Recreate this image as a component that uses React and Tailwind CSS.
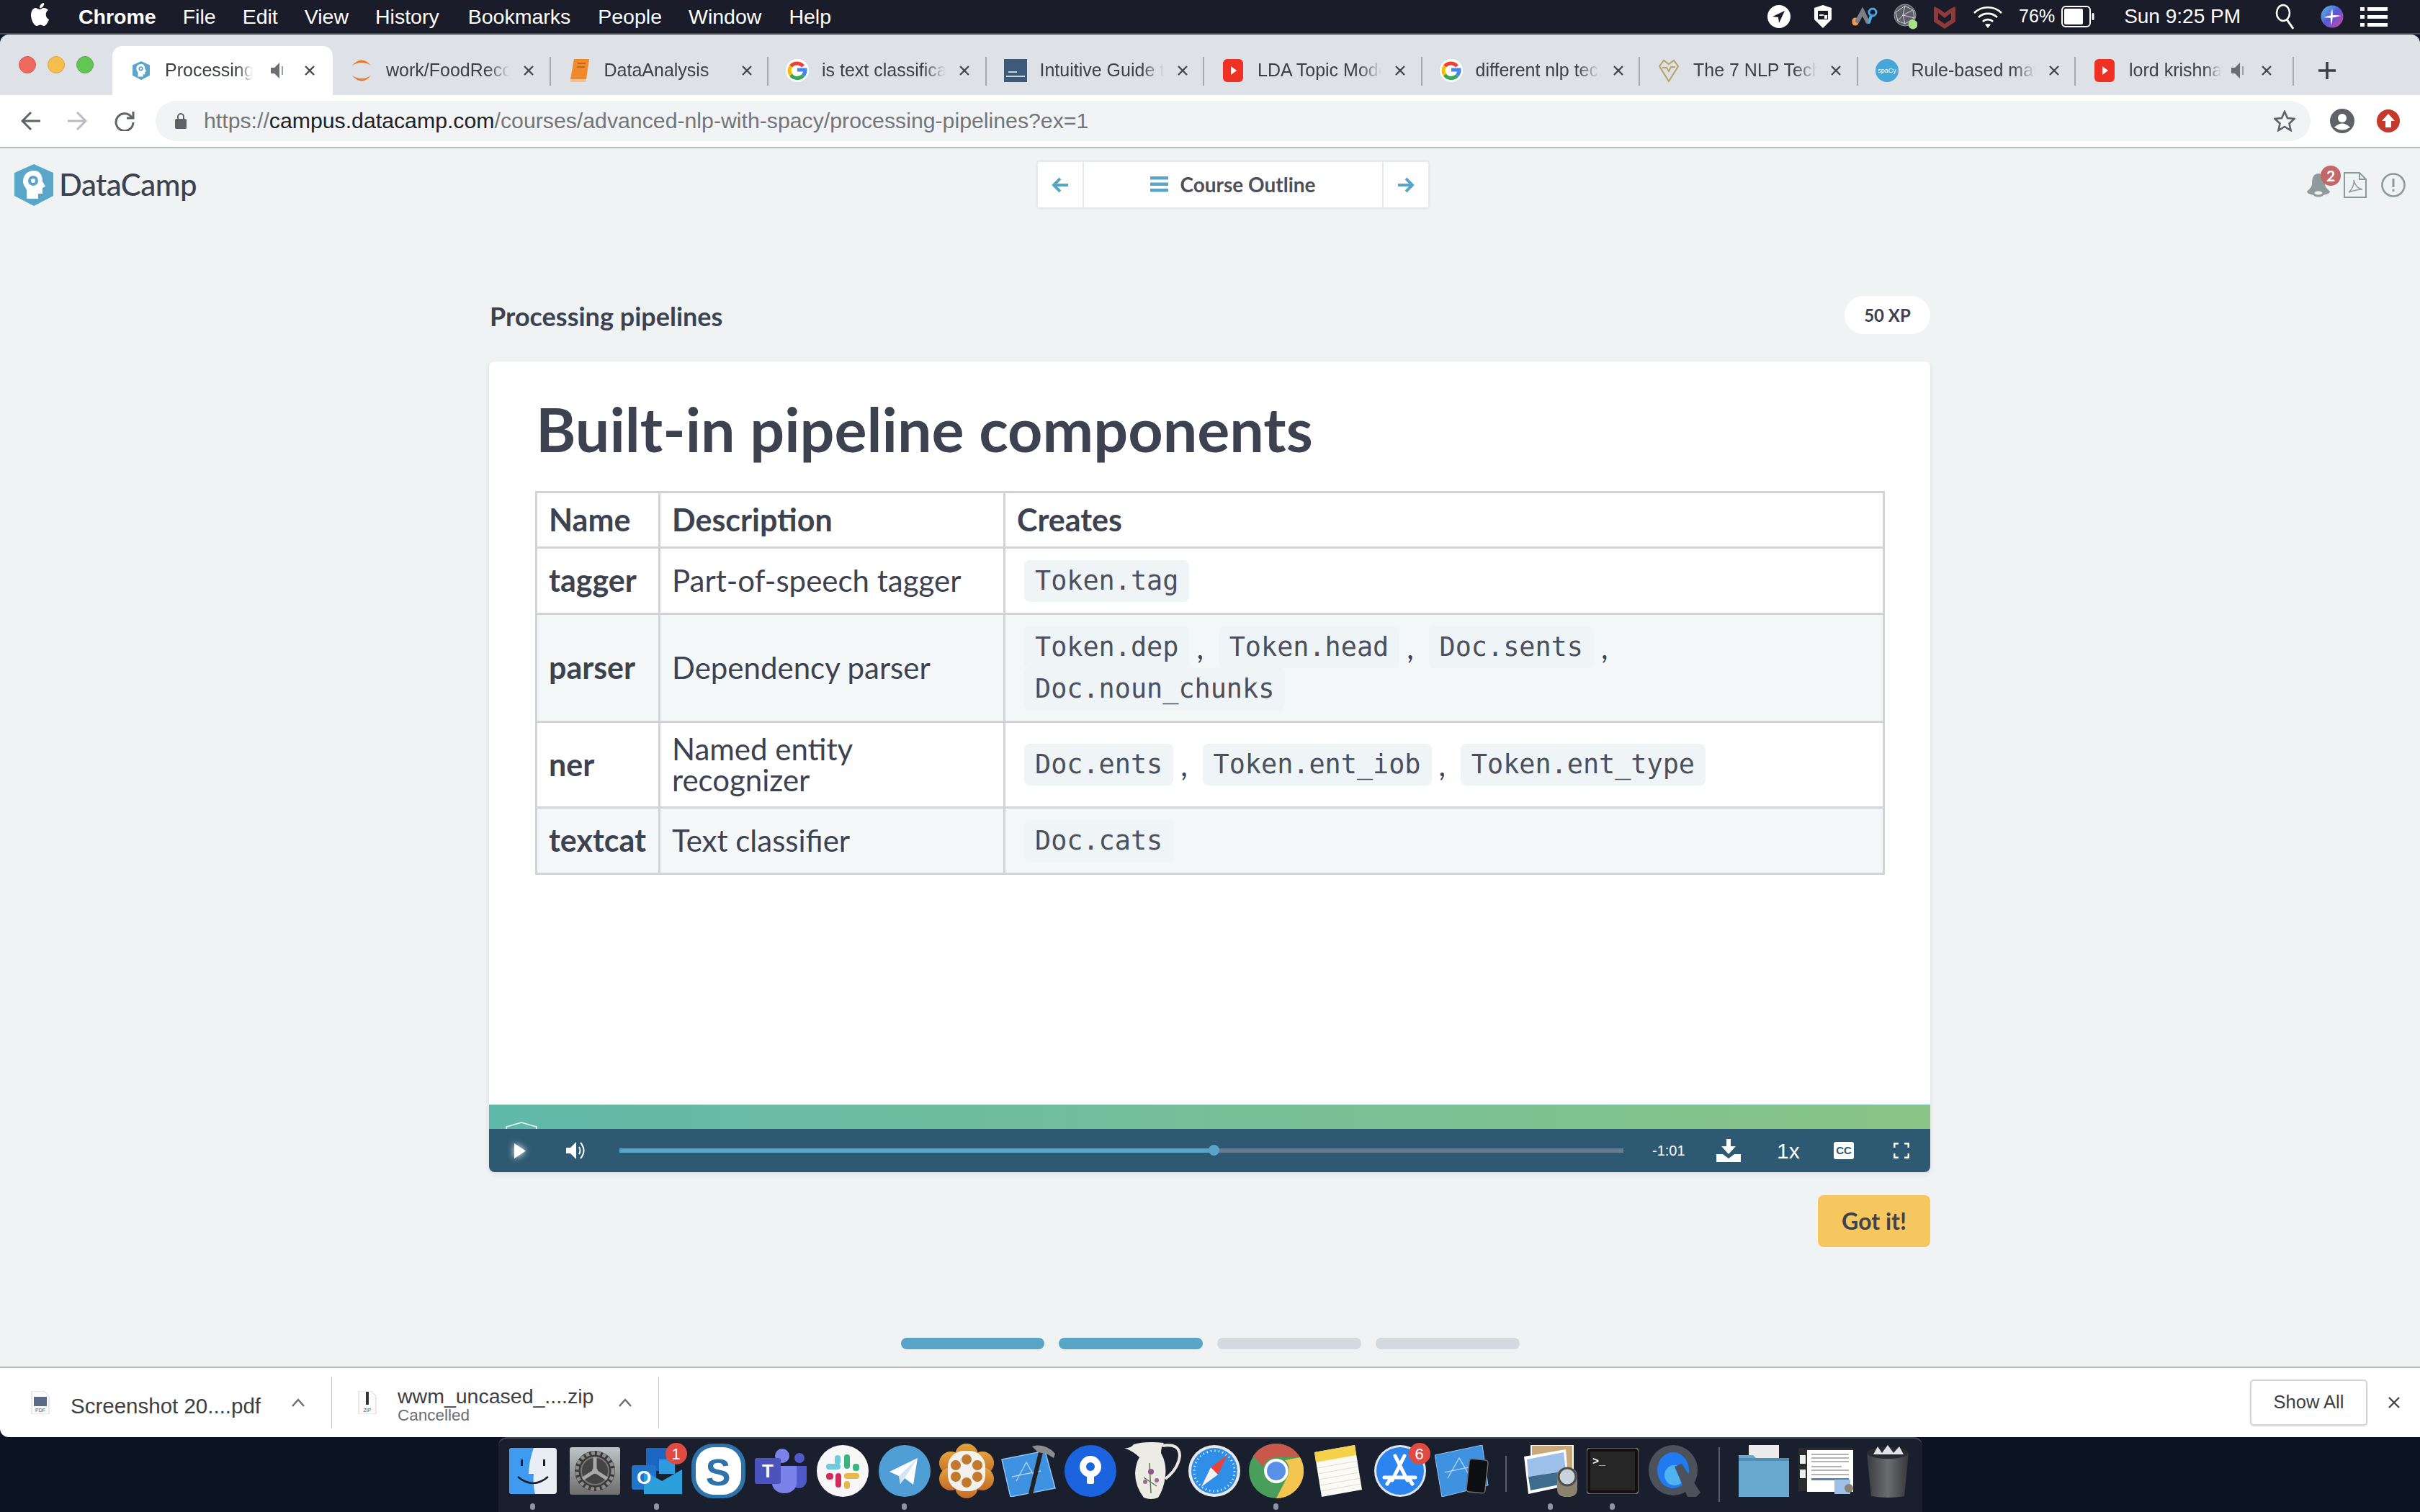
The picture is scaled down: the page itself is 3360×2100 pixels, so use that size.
import React from 'react';

const GoogleIcon = () => (
  <svg viewBox="0 0 32 32" className="w-[32px] h-[32px]">
    <circle cx="16" cy="16" r="16" fill="#fff" />
    <path d="M24 10 A11 11 0 0 0 7 10" fill="none" stroke="#ea4335" strokeWidth="5" />
    <path d="M7 10 A11 11 0 0 0 7 22" fill="none" stroke="#fbbc05" strokeWidth="5" />
    <path d="M7 22 A11 11 0 0 0 24 23" fill="none" stroke="#34a853" strokeWidth="5" />
    <path d="M24 23 A11 11 0 0 0 27 15 L16 15" fill="none" stroke="#4285f4" strokeWidth="5" />
  </svg>
);

const YoutubeIcon = () => (
  <svg viewBox="0 0 28 32" className="w-[28px] h-[32px]">
    <rect width="28" height="32" rx="6" fill="#ee3124" />
    <path d="M11 10 L19 16 L11 22 Z" fill="#fff" />
  </svg>
);

const DcShield = ({ w, h, head }) => (
  <svg viewBox="0 0 54 58" style={{ width: w, height: h }}>
    <path d="M27 0 L54 12 V44 L27 58 L0 44 V12 Z" fill="#5aa6ca" />
    <path d="M27 9 C17 9 12 16 12 24 C12 30 16 32 17 36 L17 48 L33 48 L33 41 L39 41 L39 33 L43 31 L39 24 C39 15 35 9 27 9 Z" fill="#fff" />
    <circle cx="26" cy="23" r="7" fill={head} />
    <circle cx="26" cy="23" r="3" fill="#fff" />
  </svg>
);

const tabs = [
  {
    title: 'work/FoodRecommendation',
    icon: (
      <svg viewBox="0 0 30 32" className="w-[30px] h-[32px]">
        <path d="M2 9 Q15 -6 28 9 Q15 1 2 9 Z" fill="#e8792f" />
        <path d="M2 23 Q15 38 28 23 Q15 31 2 23 Z" fill="#e8792f" />
      </svg>
    ),
  },
  {
    title: 'DataAnalysis',
    icon: (
      <svg viewBox="0 0 28 32" className="w-[28px] h-[32px]">
        <path d="M6 0 H27 L23 28 H1 Z" fill="#f08a2c" />
        <path d="M1 28 H23 L22 32 H1 Z" fill="#f7c08a" />
        <path d="M11 6 H22 M10 11 H21" stroke="#c7641a" strokeWidth="2" />
      </svg>
    ),
  },
  { title: 'is text classification', icon: <GoogleIcon /> },
  {
    title: 'Intuitive Guide to',
    icon: (
      <svg viewBox="0 0 32 32" className="w-[32px] h-[32px]">
        <rect width="32" height="32" fill="#3d5a78" />
        <rect x="6" y="17" width="12" height="2" fill="#c9d3dd" />
        <rect x="3" y="23" width="26" height="2" fill="#c9d3dd" />
      </svg>
    ),
  },
  { title: 'LDA Topic Modeling', icon: <YoutubeIcon /> },
  { title: 'different nlp techniques', icon: <GoogleIcon /> },
  {
    title: 'The 7 NLP Techniques',
    icon: (
      <svg viewBox="0 0 32 32" className="w-[32px] h-[32px]" fill="none" stroke="#b5a366" strokeWidth="2">
        <path d="M16 31 L3 10 L9 2 L16 7 L23 2 L29 10 Z" />
        <path d="M7 12 L13 12 L16 17 L19 11 L25 11" />
      </svg>
    ),
  },
  {
    title: 'Rule-based matching',
    icon: (
      <svg viewBox="0 0 32 32" className="w-[32px] h-[32px]">
        <circle cx="16" cy="16" r="16" fill="#47a6d8" />
        <text x="16" y="19" textAnchor="middle" fontSize="9" fill="#fff" fontFamily="Liberation Sans, sans-serif">spaCy</text>
      </svg>
    ),
  },
  { title: 'lord krishna', icon: <YoutubeIcon />, sound: true },
];

const Speaker = () => (
  <svg viewBox="0 0 20 28" className="w-[20px] h-[28px] shrink-0" fill="#6b6e73">
    <path d="M0 10 H5 L12 3 V25 L5 18 H0 Z" />
    <rect x="15" y="8" width="2" height="12" fill="#9a9da1" />
  </svg>
);

const TabClose = () => (
  <svg viewBox="0 0 18 18" className="w-[18px] h-[18px] shrink-0" stroke="#45484d" strokeWidth="2.4">
    <path d="M3 3 L15 15 M15 3 L3 15" />
  </svg>
);

const Tab = ({ tab }) => (
  <div className="w-[302.5px] h-[68px] flex items-center shrink-0 relative">
    <div className="w-[64px] flex justify-center pl-[16px] shrink-0">{tab.icon}</div>
    <div className={`ml-[10px] overflow-hidden whitespace-nowrap text-[25px] text-[#3c4043] [mask-image:linear-gradient(to_right,black_82%,transparent)] ${tab.sound ? 'w-[128px]' : 'w-[172px]'}`}>
      {tab.title}
    </div>
    {tab.sound && <div className="ml-[14px]"><Speaker /></div>}
    <div className={tab.sound ? 'ml-[20px]' : 'ml-[17px]'}><TabClose /></div>
    <div className="absolute right-0 top-[15px] h-[40px] w-[2px] bg-[#a7aaae]"></div>
  </div>
);

const MenuBar = () => (
  <div className="h-[46px] bg-[#1a1d29] flex items-center text-white text-[28.5px] shrink-0">
    <svg viewBox="0 0 25 32" className="ml-[43px] w-[25px] h-[32px] mb-[6px]" fill="#fff">
      <path d="M18 7 C15 7 14 9 12 9 C10 9 8 7 6 7 C2 8 0 12 0 17 C0 23 4 32 8 32 C10 32 11 30.500 13 30.500 C15 30.500 16 32 18 32 C21 32 24 26 25 23 C20 21 19 13 24 10 C22 8 20 7 18 7 Z" />
      <path d="M12 7 C12 3 15 0 18 0 C19 4 15 8 12 7 Z" />
    </svg>
    <div className="ml-[41px] flex gap-[37px]">
      <span className="font-bold">Chrome</span>
      <span>File</span>
      <span>Edit</span>
      <span>View</span>
      <span>History</span>
      <span className="ml-[3px]">Bookmarks</span>
      <span className="ml-[1px]">People</span>
      <span>Window</span>
      <span className="ml-[1px]">Help</span>
    </div>
    <div className="ml-auto pr-[45px] flex items-center">
      <svg viewBox="0 0 32 32" className="w-[32px] h-[32px]">
        <circle cx="16" cy="16" r="16" fill="#fff" />
        <path d="M24 8 L7 16 L15 17 L16 25 Z" fill="#1a1d29" />
      </svg>
      <svg viewBox="0 0 24 32" className="ml-[33px] w-[24px] h-[32px]">
        <path d="M12 0 L24 4 V20 L12 32 L0 20 V4 Z" fill="#fff" />
        <rect x="5" y="8" width="14" height="12" fill="#1a1d29" />
        <rect x="7" y="13" width="6" height="2" fill="#fff" />
        <rect x="14" y="14" width="4" height="5" fill="#fff" />
      </svg>
      <svg viewBox="0 0 36 28" className="ml-[28px] w-[36px] h-[28px]" fill="none" strokeWidth="6" strokeLinecap="round">
        <path d="M5 22 L5 20" stroke="#f29a4a" strokeWidth="9" />
        <path d="M8 20 L15 7 L22 21" stroke="#7b7f8a" />
        <circle cx="29" cy="8" r="5" stroke="#4ba9e0" strokeWidth="3" />
        <path d="M27 13 L24 22" stroke="#4ba9e0" strokeWidth="4" />
      </svg>
      <svg viewBox="0 0 34 36" className="ml-[21px] w-[34px] h-[36px]" fill="none">
        <circle cx="17" cy="16" r="15" fill="#5c5f68" stroke="#9a9ca3" strokeWidth="1" />
        <path d="M4 12 L17 3 L28 9 L30 20 L17 28 L7 24 Z M17 3 L14 16 L28 9 M14 16 L30 20 M14 16 L7 24 M14 16 L17 28" stroke="#d3d5da" strokeWidth="1" />
        <circle cx="28" cy="29" r="6.500" fill="#a5e084" />
      </svg>
      <svg viewBox="0 0 30 34" className="ml-[23px] w-[30px] h-[34px]" fill="#8e3a3a">
        <path d="M0 3 L7 6 L15 12 L23 6 L30 3 V24 L15 34 L0 24 Z M6 12 V21 L15 27 L24 21 V12 L15 19 Z" fillRule="evenodd" />
      </svg>
      <svg viewBox="0 0 42 32" className="ml-[24px] w-[42px] h-[32px]" fill="none" stroke="#fff" strokeWidth="2.600">
        <path d="M2 11 A27 27 0 0 1 40 11" />
        <path d="M8 17 A19 19 0 0 1 34 17" />
        <path d="M14 23 A10 10 0 0 1 28 23" />
        <path d="M21 32 L17 27 Q21 25 25 27 Z" fill="#fff" stroke="none" />
      </svg>
      <span className="ml-[22px] text-[25px]">76%</span>
      <svg viewBox="0 0 46 32" className="ml-[9px] w-[46px] h-[32px]">
        <rect x="1" y="2" width="39" height="28" rx="5" fill="none" stroke="#fff" strokeWidth="2" />
        <rect x="4" y="5" width="26" height="22" rx="2" fill="#fff" />
        <rect x="42.500" y="11" width="3" height="10" rx="1.500" fill="#fff" />
      </svg>
      <span className="ml-[41px] text-[28px] whitespace-nowrap">Sun 9:25 PM</span>
      <svg viewBox="0 0 26 36" className="ml-[48px] w-[26px] h-[36px]" fill="none" stroke="#fff" strokeWidth="2.600">
        <ellipse cx="11" cy="13" rx="9" ry="11" />
        <path d="M16 22 L25 35" strokeWidth="3" />
      </svg>
      <svg viewBox="0 0 32 32" className="ml-[37px] w-[32px] h-[32px]">
        <defs>
          <linearGradient id="siri" x1="0" y1="0" x2="1" y2="1">
            <stop offset="0" stopColor="#55c8e8" />
            <stop offset="0.5" stopColor="#5a55d8" />
            <stop offset="1" stopColor="#d84a9a" />
          </linearGradient>
        </defs>
        <circle cx="16" cy="16" r="15.500" fill="url(#siri)" />
        <path d="M4 17 Q16 12 28 15 Q16 19 4 17 Z M16 5 Q18 16 15 28 Q12 16 16 5 Z" fill="#fff" />
      </svg>
      <svg viewBox="0 0 38 32" className="ml-[23px] w-[38px] h-[32px]" fill="#fff">
        <rect x="0" y="3" width="6" height="5" />
        <rect x="10" y="3" width="28" height="5" />
        <rect x="0" y="14" width="6" height="5" />
        <rect x="10" y="14" width="28" height="5" />
        <rect x="0" y="25" width="6" height="5" />
        <rect x="10" y="25" width="28" height="5" />
      </svg>
    </div>
  </div>
);

const TabStrip = () => (
  <div className="h-[84px] bg-[#dee1e6] rounded-t-[12px] flex items-end shrink-0">
    <div className="w-[156px] h-[84px] flex items-center gap-[16px] pl-[26px] shrink-0">
      <div className="w-[24px] h-[24px] rounded-full bg-[#ee6a5f] border border-[#d8574d]"></div>
      <div className="w-[24px] h-[24px] rounded-full bg-[#f6be4f] border border-[#dea63c]"></div>
      <div className="w-[24px] h-[24px] rounded-full bg-[#62c554] border border-[#53ad46]"></div>
    </div>
    <div className="w-[306px] h-[68px] bg-white rounded-t-[14px] flex items-center shrink-0">
      <div className="ml-[28px] shrink-0"><DcShield w={24} h={32} head="#5aa6ca" /></div>
      <div className="ml-[21px] w-[122px] overflow-hidden whitespace-nowrap text-[25px] text-[#3c4043] [mask-image:linear-gradient(to_right,black_82%,transparent)]">
        Processing pipelines
      </div>
      <div className="ml-[25px]"><Speaker /></div>
      <div className="ml-[25px]"><TabClose /></div>
    </div>
    {tabs.map((tab) => (
      <Tab key={tab.title} tab={tab} />
    ))}
    <svg viewBox="0 0 26 26" className="ml-[33px] mb-[21px] w-[26px] h-[26px]" stroke="#3c4043" strokeWidth="3.600">
      <path d="M13 1 V25 M1 13 H25" />
    </svg>
  </div>
);

const Toolbar = () => (
  <div className="h-[74px] bg-white border-b-2 border-[#b9bcbd] flex items-start pt-[8px] shrink-0">
    <div className="h-[56px] flex items-center pl-[29px] shrink-0">
      <svg viewBox="0 0 28 28" className="w-[28px] h-[28px]" fill="none" stroke="#5f6368" strokeWidth="3">
        <path d="M27 14 H3 M14 2 L2 14 L14 26" />
      </svg>
      <svg viewBox="0 0 28 28" className="ml-[36px] w-[28px] h-[28px]" fill="none" stroke="#b9bbbe" strokeWidth="3">
        <path d="M1 14 H25 M14 2 L26 14 L14 26" />
      </svg>
      <svg viewBox="0 0 28 28" className="ml-[38px] w-[28px] h-[28px]" fill="none" stroke="#5f6368" strokeWidth="3">
        <path d="M24 9 A12 12 0 1 0 26 16" />
        <path d="M26 1 V10 H17" />
      </svg>
    </div>
    <div className="ml-[29px] h-[56px] flex-1 bg-[#f1f3f4] rounded-full flex items-center pl-[26px] pr-[21px]">
      <svg viewBox="0 0 18 24" className="w-[18px] h-[24px]" fill="#5f6368">
        <rect x="1" y="9" width="16" height="14" rx="2" />
        <path d="M5 10 V6 A4 4 0 0 1 13 6 V10" fill="none" stroke="#5f6368" strokeWidth="2" />
      </svg>
      <div className="ml-[23px] text-[30.25px] whitespace-nowrap text-[#72767a]">
        https://<span className="text-[#202124]">campus.datacamp.com</span>/courses/advanced-nlp-with-spacy/processing-pipelines?ex=1
      </div>
      <svg viewBox="0 0 30 30" className="ml-auto w-[30px] h-[30px]" fill="none" stroke="#5f6368" strokeWidth="2.600">
        <path d="M15 2 L19 11 L28.500 12 L21.500 18.500 L23.500 28 L15 23 L6.500 28 L8.500 18.500 L1.500 12 L11 11 Z" />
      </svg>
    </div>
    <div className="h-[56px] flex items-center pr-[28px] shrink-0">
      <svg viewBox="0 0 34 34" className="ml-[27px] w-[34px] h-[34px]">
        <circle cx="17" cy="17" r="17" fill="#5f6368" />
        <circle cx="17" cy="13" r="6" fill="#fff" />
        <path d="M6 26 Q17 15 28 26 Q17 33 6 26 Z" fill="#fff" />
      </svg>
      <svg viewBox="0 0 32 32" className="ml-[31px] w-[32px] h-[32px]">
        <circle cx="16" cy="16" r="16" fill="#c5392c" />
        <path d="M16 6 L25 16 H20 V25 H12 V16 H7 Z" fill="#fff" />
      </svg>
    </div>
  </div>
);

const PageHeader = () => (
  <div className="flex items-start pt-[16px] pl-[20px] pr-[20px] shrink-0">
    <div className="flex items-center h-[69px] w-[255px] shrink-0">
      <DcShield w={54} h={58} head="#5aa6ca" />
      <span className="ml-[8px] text-[42px] font-medium text-[#3d4251] tracking-[-0.5px]">DataCamp</span>
    </div>
    <div className="ml-[1163px] w-[548px] h-[69px] bg-white border-[3px] border-[#e6eaeb] rounded-[6px] flex items-stretch shrink-0">
      <div className="w-[64px] flex items-center justify-center border-r-2 border-[#e6eaeb]">
        <svg viewBox="0 0 24 24" className="w-[24px] h-[24px]" fill="none" stroke="#58a5c8" strokeWidth="4">
          <path d="M23 12 H4 M12 3 L3 12 L12 21" />
        </svg>
      </div>
      <div className="flex-1 flex items-center justify-center pb-[2px]">
        <svg viewBox="0 0 25 22" className="w-[25px] h-[22px]" fill="#58a5c8">
          <rect width="25" height="4.500" />
          <rect y="8.500" width="25" height="4.500" />
          <rect y="17" width="25" height="4.500" />
        </svg>
        <span className="ml-[16px] text-[28px] font-bold text-[#4b505c]">Course Outline</span>
      </div>
      <div className="w-[64px] flex items-center justify-center border-l-2 border-[#e6eaeb]">
        <svg viewBox="0 0 24 24" className="w-[24px] h-[24px]" fill="none" stroke="#58a5c8" strokeWidth="4">
          <path d="M1 12 H20 M12 3 L21 12 L12 21" />
        </svg>
      </div>
    </div>
    <div className="ml-auto h-[69px] flex items-center">
      <div className="relative w-[36px] h-[36px]">
        <svg viewBox="0 0 36 36" className="w-[36px] h-[36px]" fill="#8e9a9c">
          <path d="M18 2 C11 2 9 9 9 16 C9 21 5 24 2 27 C2 30 8 32 18 32 C28 32 34 30 34 27 C31 24 27 21 27 16 C27 9 25 2 18 2 Z" />
          <ellipse cx="18" cy="29" rx="7" ry="4" fill="#eff3f4" stroke="#8e9a9c" strokeWidth="3" />
        </svg>
        <div className="absolute left-[21px] top-[-9px] w-[28px] h-[28px] rounded-full bg-[#c26868] text-white text-[21px] font-bold flex items-center justify-center">2</div>
      </div>
      <svg viewBox="0 0 32 36" className="ml-[17px] w-[32px] h-[36px]" fill="none" stroke="#8e9a9c" strokeWidth="2">
        <path d="M1 1 H22 L31 10 V35 H1 Z M22 1 V10 H31" />
        <path d="M7 28 C12 24 15 17 14 11 C16 19 20 23 26 24 C19 24 13 26 7 28 Z" strokeWidth="1.500" />
      </svg>
      <svg viewBox="0 0 34 34" className="ml-[20px] w-[34px] h-[34px]" fill="none" stroke="#8e9a9c" strokeWidth="2.600">
        <circle cx="17" cy="17" r="15.500" />
        <path d="M17 8 V20 M17 23 V26" strokeWidth="3" />
      </svg>
    </div>
  </div>
);

const Code = ({ children }) => (
  <code className="inline-block align-top h-[58px] leading-[58px] px-[15px] mx-[10px] bg-[#eff4f6] rounded-[8px] font-['DejaVu_Sans_Mono',monospace] text-[36.8px] text-[#4b505c]">
    {children}
  </code>
);

const Row = ({ name, height, tinted, desc, children }) => (
  <tr className={`${height} ${tinted ? 'bg-[#f4f7f8]' : 'bg-white'}`}>
    <td className="border-[3px] border-[#d1d3d7] px-[16px] font-bold text-[43px]">{name}</td>
    <td className="border-[3px] border-[#d1d3d7] px-[16px] leading-[43px]">{desc}</td>
    <td className="border-[3px] border-[#d1d3d7] px-[16px] leading-[58px]">{children}</td>
  </tr>
);

const Card = () => (
  <div className="w-[2001px] h-[1126px] bg-white rounded-[8px] shadow-[0_2px_6px_rgba(60,66,81,0.12)] flex flex-col overflow-hidden">
    <div className="flex-1 pt-[46px] px-[65px]">
      <h1 className="text-[84.4px] leading-[96px] font-bold text-[#3d4251] whitespace-nowrap">Built-in pipeline components</h1>
      <table className="mt-[38px] ml-[-1px] w-[1874px] table-fixed border-collapse text-[42px] text-[#3d4251]">
        <colgroup>
          <col className="w-[171px]" />
          <col className="w-[479px]" />
          <col />
        </colgroup>
        <tbody>
          <tr className="h-[77px] bg-white font-bold text-left text-[43px]">
            <td className="border-[3px] border-[#d1d3d7] px-[16px]">Name</td>
            <td className="border-[3px] border-[#d1d3d7] px-[16px]">Description</td>
            <td className="border-[3px] border-[#d1d3d7] px-[16px]">Creates</td>
          </tr>
          <Row name="tagger" height="h-[92px]" desc="Part-of-speech tagger">
            <Code>Token.tag</Code>
          </Row>
          <Row name="parser" height="h-[150px]" tinted desc="Dependency parser">
            <Code>Token.dep</Code>, <Code>Token.head</Code>, <Code>Doc.sents</Code>,
            <br />
            <Code>Doc.noun_chunks</Code>
          </Row>
          <Row name="ner" height="h-[119px]" desc={<>Named entity<br />recognizer</>}>
            <Code>Doc.ents</Code>, <Code>Token.ent_iob</Code>, <Code>Token.ent_type</Code>
          </Row>
          <Row name="textcat" height="h-[92px]" tinted desc="Text classifier">
            <Code>Doc.cats</Code>
          </Row>
        </tbody>
      </table>
    </div>
    <div className="relative h-[34px] bg-gradient-to-r from-[#60b8a9] to-[#89c585] border-t border-[#8fd0bd] shrink-0">
      <svg viewBox="0 0 44 10" className="absolute left-[23px] bottom-0 w-[44px] h-[10px]" fill="none" stroke="#fff" strokeWidth="1.500">
        <path d="M1 10 V7 L22 1 L43 7 V10" />
      </svg>
    </div>
    <div className="h-[60px] bg-[#2d5a72] flex items-center shrink-0">
      <svg viewBox="0 0 16 21" className="ml-[35px] w-[16px] h-[21px] [filter:drop-shadow(0_0_5px_#ffffff)]" fill="#fff">
        <path d="M0 0 L16 10.500 L0 21 Z" />
      </svg>
      <svg viewBox="0 0 28 28" className="ml-[56px] w-[28px] h-[28px]" fill="#fff">
        <path d="M0 10 H6 L14 2 V26 L6 18 H0 Z" />
        <path d="M18 9 Q21 14 18 19" fill="none" stroke="#fff" strokeWidth="2" />
        <path d="M20 3 Q29 14 20 25" fill="none" stroke="#fff" strokeWidth="2" />
      </svg>
      <div className="relative ml-[46px] w-[1394px] h-[6px] bg-[#6a7a91]">
        <div className="w-[825px] h-[6px] bg-[#58a5c8]"></div>
        <div className="absolute left-[818px] top-[-5px] w-[15px] h-[15px] rounded-full bg-[#58a5c8]"></div>
      </div>
      <span className="ml-[40px] w-[44px] text-[20px] text-white font-['Liberation_Sans',sans-serif] whitespace-nowrap">-1:01</span>
      <svg viewBox="0 0 34 32" className="ml-[45px] w-[34px] h-[32px]" fill="#fff">
        <path d="M14 0 H20 V10 H27 L17 21 L7 10 H14 Z" />
        <path d="M0 21 H9 L17 27 L25 21 H34 V32 H0 Z" />
      </svg>
      <span className="ml-[50px] w-[28px] text-[30px] text-white font-['Liberation_Sans',sans-serif]">1x</span>
      <div className="ml-[51px] w-[28px] h-[24px] bg-white rounded-[3px] text-[#2d5a72] text-[15px] font-bold leading-[24px] text-center font-['Liberation_Sans',sans-serif]">CC</div>
      <svg viewBox="0 0 22 22" className="ml-[55px] w-[22px] h-[22px]" fill="none" stroke="#fff" strokeWidth="3">
        <path d="M1 7 V1 H7 M15 1 H21 V7 M1 15 V21 H7 M21 15 V21 H15" />
      </svg>
    </div>
  </div>
);

const Pagination = () => (
  <div className="mt-[126px] flex gap-[20px] justify-center shrink-0">
    <div className="w-[199px] h-[16px] rounded-full bg-[#58a5c8]"></div>
    <div className="w-[200px] h-[16px] rounded-full bg-[#58a5c8]"></div>
    <div className="w-[200px] h-[16px] rounded-full bg-[#d2d9df]"></div>
    <div className="w-[200px] h-[16px] rounded-full bg-[#d2d9df]"></div>
  </div>
);

const Chevron = () => (
  <svg viewBox="0 0 20 12" className="w-[20px] h-[12px] shrink-0" fill="none" stroke="#6b6e73" strokeWidth="2.400">
    <path d="M2 11 L10 2 L18 11" />
  </svg>
);

const FileIcon = ({ label }) => (
  <svg viewBox="0 0 26 32" className="w-[26px] h-[32px] shrink-0">
    <path d="M1 0 H18 L25 7 V32 H1 Z" fill="#fbfbfb" stroke="#d5d5d5" />
    {label === 'PDF' ? (
      <rect x="4" y="8" width="18" height="13" fill="#5b6b85" />
    ) : (
      <rect x="11" y="1" width="4" height="18" fill="#333" />
    )}
    <text x="13" y="29" textAnchor="middle" fontSize="7" fill="#555" fontFamily="Liberation Sans, sans-serif">{label}</text>
  </svg>
);

const DownloadBar = () => (
  <div className="h-[96px] bg-white rounded-bl-[12px] flex items-center text-[#3c4043] shrink-0">
    <div className="ml-[43px]"><FileIcon label="PDF" /></div>
    <span className="ml-[29px] mt-[10px] w-[267px] text-[29.5px] whitespace-nowrap">Screenshot 20....pdf</span>
    <div className="ml-[39px]"><Chevron /></div>
    <div className="ml-[36px] w-[1px] h-[72px] bg-[#c4c6c8]"></div>
    <div className="ml-[36px]"><FileIcon label="ZIP" /></div>
    <div className="ml-[29px] w-[274px] flex flex-col mt-[6px]">
      <span className="text-[28.5px] leading-[30px] whitespace-nowrap">wwm_uncased_....zip</span>
      <span className="text-[22.5px] leading-[24px] text-[#6b6e73]">Cancelled</span>
    </div>
    <div className="ml-[32px]"><Chevron /></div>
    <div className="ml-[36px] w-[1px] h-[72px] bg-[#c4c6c8]"></div>
    <div className="ml-auto w-[163px] h-[64px] pb-[2px] border-2 border-[#d3d4d6] rounded-[5px] flex items-center justify-center text-[25.5px] text-[#3c4043] shadow-sm">Show All</div>
    <svg viewBox="0 0 20 20" className="ml-[27px] mr-[26px] w-[20px] h-[20px]" stroke="#45484d" strokeWidth="2.400">
      <path d="M3 3 L17 17 M17 3 L3 17" />
    </svg>
  </div>
);

const Cell = ({ children, dot, badge }) => (
  <div className="relative w-[86px] h-[104px] flex flex-col items-center shrink-0">
    <div className="h-[90px] w-[86px] flex items-center justify-center">{children}</div>
    {dot && <div className="w-[7px] h-[9px] rounded-full bg-[#8f93a5]"></div>}
    {badge && (
      <div className="absolute right-[1px] top-[6px] w-[30px] h-[30px] rounded-full bg-[#e04a40] text-white text-[22px] flex items-center justify-center">{badge}</div>
    )}
  </div>
);

const Dock = () => (
  <div className="flex justify-center flex-1">
    <div className="w-[1977px] h-[104px] pl-[5px] bg-[#1a1f2e] border-t-2 border-[#4b4e58] rounded-t-[12px] flex items-start">
      <Cell dot>
        <svg viewBox="0 0 66 64" className="w-[66px] h-[64px]">
          <rect width="66" height="64" rx="4" fill="#e9eef5" />
          <path d="M4 0 H34 C30 12 27 24 27 36 H34 C33 46 34 56 36 64 H4 A4 4 0 0 1 0 60 V4 A4 4 0 0 1 4 0 Z" fill="#3f9bf0" />
          <rect x="16" y="16" width="3" height="9" fill="#1a1f2e" />
          <rect x="47" y="16" width="3" height="9" fill="#1a1f2e" />
          <path d="M12 40 Q33 58 54 40" fill="none" stroke="#1a1f2e" strokeWidth="2.500" />
        </svg>
      </Cell>
      <Cell>
        <svg viewBox="0 0 70 66" className="w-[70px] h-[66px]">
          <defs>
            <linearGradient id="prefs" x1="0" y1="0" x2="0" y2="1">
              <stop offset="0" stopColor="#bcc5c8" />
              <stop offset="1" stopColor="#6e6e6e" />
            </linearGradient>
          </defs>
          <rect width="70" height="66" rx="3" fill="url(#prefs)" />
          <circle cx="35" cy="33" r="28" fill="#3a3a3a" />
          <circle cx="35" cy="33" r="25" fill="none" stroke="#8d8d8d" strokeWidth="5" strokeDasharray="5 3" />
          <circle cx="35" cy="33" r="19" fill="#444" stroke="#777" strokeWidth="2" />
          <path d="M35 33 L35 14 M35 33 L18 44 M35 33 L52 44" stroke="#a9a9a9" strokeWidth="5" />
          <circle cx="35" cy="33" r="4" fill="#a9a9a9" />
        </svg>
      </Cell>
      <Cell dot badge="1">
        <svg viewBox="0 0 70 64" className="w-[70px] h-[64px]">
          <rect x="20" y="0" width="38" height="32" rx="2" fill="#1a66c0" />
          <rect x="38" y="16" width="22" height="20" fill="#2c9be0" />
          <rect x="0" y="24" width="34" height="34" rx="3" fill="#2173cb" />
          <path d="M17 64 H70 V30 L42 46 L17 32 Z" fill="#2b9fdc" />
          <text x="17" y="50" textAnchor="middle" fontSize="26" fontWeight="bold" fill="#fff" fontFamily="Liberation Sans, sans-serif">O</text>
        </svg>
      </Cell>
      <Cell>
        <svg viewBox="0 0 75 76" className="w-[75px] h-[76px]">
          <rect x="0" y="0" width="75" height="76" rx="30" fill="#2d72a8" />
          <rect x="6" y="5" width="63" height="66" rx="25" fill="#fff" />
          <text x="37" y="58" textAnchor="middle" fontSize="52" fontWeight="bold" fill="#2d72a8" fontFamily="Liberation Sans, sans-serif">S</text>
        </svg>
      </Cell>
      <Cell>
        <svg viewBox="0 0 72 62" className="w-[72px] h-[62px]">
          <circle cx="38" cy="10" r="10" fill="#7b83eb" />
          <circle cx="62" cy="13" r="7" fill="#5059c9" />
          <path d="M50 24 H72 V44 A11 11 0 0 1 50 44 Z" fill="#5059c9" />
          <path d="M24 24 H58 V48 A17 14 0 0 1 24 48 Z" fill="#7b83eb" />
          <rect x="0" y="13" width="36" height="36" rx="3" fill="#4b53bc" />
          <text x="18" y="40" textAnchor="middle" fontSize="26" fontWeight="bold" fill="#fff" fontFamily="Liberation Sans, sans-serif">T</text>
        </svg>
      </Cell>
      <Cell>
        <svg viewBox="0 0 72 72" className="w-[72px] h-[72px]">
          <circle cx="36" cy="36" r="36" fill="#f7f7f7" />
          <rect x="13" y="26" width="20" height="8" rx="4" fill="#6ecadc" />
          <rect x="25" y="14" width="8" height="13" rx="4" fill="#6ecadc" />
          <rect x="38" y="13" width="8" height="20" rx="4" fill="#3db480" />
          <rect x="50" y="26" width="9" height="10" rx="4" fill="#3db480" />
          <rect x="38" y="39" width="21" height="8" rx="4" fill="#e9b74a" />
          <rect x="38" y="50" width="8" height="11" rx="4" fill="#e9b74a" />
          <rect x="26" y="39" width="8" height="20" rx="4" fill="#d12d5b" />
          <rect x="13" y="39" width="10" height="9" rx="4" fill="#d12d5b" />
        </svg>
      </Cell>
      <Cell dot>
        <svg viewBox="0 0 72 72" className="w-[72px] h-[72px]">
          <circle cx="36" cy="36" r="36" fill="#4f9fd6" />
          <path d="M15 37 L54 18 L48 55 L36 46 L30 54 L28 43 Z" fill="#fff" />
          <path d="M28 43 L54 18 L36 46 L30 54 Z" fill="#d4e5f2" />
        </svg>
      </Cell>
      <Cell>
        <svg viewBox="0 0 76 76" className="w-[76px] h-[76px]">
          <defs>
            <linearGradient id="flower" x1="0" y1="0" x2="0" y2="1">
              <stop offset="0" stopColor="#e3a43a" />
              <stop offset="1" stopColor="#c46a28" />
            </linearGradient>
          </defs>
          <circle cx="38" cy="16" r="16" fill="url(#flower)" />
          <circle cx="38" cy="60" r="16" fill="url(#flower)" />
          <circle cx="16" cy="27" r="16" fill="url(#flower)" />
          <circle cx="60" cy="27" r="16" fill="url(#flower)" />
          <circle cx="16" cy="49" r="16" fill="url(#flower)" />
          <circle cx="60" cy="49" r="16" fill="url(#flower)" />
          <rect x="12" y="10" width="52" height="56" rx="22" fill="#f3f1ee" />
          <circle cx="38" cy="22" r="7" fill="#c17a2d" />
          <circle cx="38" cy="54" r="7" fill="#c17a2d" />
          <circle cx="23" cy="30" r="7" fill="#c17a2d" />
          <circle cx="53" cy="30" r="7" fill="#c17a2d" />
          <circle cx="23" cy="46" r="7" fill="#c17a2d" />
          <circle cx="53" cy="46" r="7" fill="#c17a2d" />
        </svg>
      </Cell>
      <Cell>
        <svg viewBox="0 0 78 72" className="w-[78px] h-[72px]">
          <path d="M2 20 L62 8 L76 60 L14 72 Z" fill="#3f92e0" stroke="#8cc4f2" strokeWidth="1.500" />
          <path d="M22 50 L36 24 L50 48 M16 44 L56 36" fill="none" stroke="#a5d0f5" strokeWidth="1.500" />
          <path d="M56 10 L42 68" stroke="#222" strokeWidth="6" strokeLinecap="round" />
          <path d="M44 2 C54 -2 68 2 76 12 L74 18 L64 12 L52 10 Z" fill="#8b8d90" />
        </svg>
      </Cell>
      <Cell>
        <svg viewBox="0 0 72 72" className="w-[72px] h-[72px]">
          <circle cx="36" cy="36" r="36" fill="#1c63e0" />
          <circle cx="36" cy="30" r="15" fill="#fff" />
          <circle cx="36" cy="30" r="6" fill="#1c63e0" />
          <rect x="31" y="36" width="10" height="18" rx="2" fill="#fff" />
        </svg>
      </Cell>
      <Cell>
        <svg viewBox="0 0 80 82" className="w-[80px] h-[82px]">
          <path d="M54 6 Q78 2 78 20 Q76 38 58 52" fill="none" stroke="#e8e8e0" strokeWidth="4" />
          <path d="M1 9 Q10 10 14 4 Q30 -1 56 2 Q52 8 52 16 Q60 30 58 48 Q56 66 48 78 Q38 82 28 78 Q16 62 16 44 Q17 30 22 22 Q14 14 1 9 Z" fill="#ecece4" />
          <path d="M36 30 L38 72 M28 50 L46 62" stroke="#5d7a4e" strokeWidth="1.500" />
          <circle cx="38" cy="42" r="4" fill="#8c5a88" />
          <circle cx="46" cy="54" r="3" fill="#a36a94" />
          <circle cx="30" cy="56" r="3" fill="#a36a94" />
        </svg>
      </Cell>
      <Cell>
        <svg viewBox="0 0 72 72" className="w-[72px] h-[72px]">
          <circle cx="36" cy="36" r="36" fill="#e6e8ea" />
          <circle cx="36" cy="36" r="32" fill="#2f8fe8" />
          <circle cx="36" cy="36" r="28" fill="none" stroke="#cfe4f7" strokeWidth="3" strokeDasharray="1.500 4" />
          <path d="M54 14 L31 31 L41 41 Z" fill="#e8443a" />
          <path d="M18 58 L31 31 L41 41 Z" fill="#f2f2f2" />
        </svg>
      </Cell>
      <Cell dot>
        <svg viewBox="0 0 76 76" className="w-[76px] h-[76px]">
          <circle cx="38" cy="38" r="38" fill="#4a9e5c" />
          <path d="M38 0 A38 38 0 0 1 71 19 L38 19 A19 19 0 0 0 20 32 L6 17 A38 38 0 0 1 38 0 Z" fill="#c9584c" />
          <path d="M71 19 A38 38 0 0 1 38 76 L54 45 A19 19 0 0 0 50 23 Z" fill="#f5c54f" />
          <circle cx="38" cy="38" r="17" fill="#fff" />
          <circle cx="38" cy="38" r="13" fill="#5a8fe8" />
        </svg>
      </Cell>
      <Cell>
        <svg viewBox="0 0 66 72" className="w-[66px] h-[72px]">
          <path d="M0 10 L56 0 L66 62 L10 72 Z" fill="#fbfaf5" />
          <path d="M0 10 L56 0 L58 14 L2 24 Z" fill="#f6d24a" />
          <path d="M4 32 L60 22 M5 40 L61 30 M6 48 L62 38 M8 56 L63 46 M9 64 L64 54" stroke="#dedcd2" strokeWidth="1" />
        </svg>
      </Cell>
      <Cell badge="6">
        <svg viewBox="0 0 72 72" className="w-[72px] h-[72px]">
          <circle cx="36" cy="36" r="36" fill="#dfe6ee" />
          <circle cx="36" cy="36" r="33" fill="#2c84ee" />
          <path d="M42 15 L25 49 M29 15 L46 49 M14 45 H57 M18 54 L22 48 M53 54 L49 48" stroke="#fff" strokeWidth="5" strokeLinecap="round" />
        </svg>
      </Cell>
      <Cell>
        <svg viewBox="0 0 76 72" className="w-[76px] h-[72px]">
          <path d="M0 14 L66 0 L74 56 L10 72 Z" fill="#3f92e0" stroke="#8cc4f2" strokeWidth="1" />
          <path d="M18 46 L34 18 L48 42 M14 38 L52 30" fill="none" stroke="#a5d0f5" strokeWidth="1.500" />
          <rect x="46" y="20" width="26" height="46" rx="4" fill="#0e0f12" stroke="#6d6f75" strokeWidth="1.500" transform="rotate(6 59 43)" />
        </svg>
      </Cell>
      <div className="w-[37px] h-[50px] mt-[24px] flex justify-center shrink-0">
        <div className="w-[2px] bg-[#5a5e6b]"></div>
      </div>
      <Cell dot>
        <svg viewBox="0 0 74 72" className="w-[74px] h-[72px]">
          <rect x="10" y="0" width="58" height="50" fill="#c9a97a" stroke="#fff" strokeWidth="2" />
          <path d="M0 16 L58 6 L62 56 L6 68 Z" fill="#fff" />
          <path d="M4 20 L55 10 L58 36 L6 44 Z" fill="#9cc0ea" />
          <path d="M6 44 L58 36 L59 53 L9 63 Z" fill="#3e6c8d" />
          <rect x="46" y="32" width="28" height="40" rx="10" fill="#8c8270" />
          <circle cx="60" cy="44" r="12" fill="#c8d3dc" stroke="#4c4c4c" strokeWidth="3" />
        </svg>
      </Cell>
      <Cell dot>
        <svg viewBox="0 0 72 64" className="w-[72px] h-[64px]">
          <rect width="72" height="64" rx="5" fill="#111" stroke="#7a7a7a" strokeWidth="1.500" />
          <rect x="5" y="5" width="62" height="54" fill="#262626" />
          <text x="8" y="23" fontSize="15" fontWeight="bold" fill="#fff" fontFamily="Liberation Mono, monospace">&gt;_</text>
        </svg>
      </Cell>
      <Cell>
        <svg viewBox="0 0 72 72" className="w-[72px] h-[72px]">
          <ellipse cx="34" cy="35" rx="34" ry="35" fill="#4c525c" />
          <ellipse cx="34" cy="35" rx="22" ry="25" fill="#1f7bef" />
          <ellipse cx="36" cy="42" rx="14" ry="14" fill="#4fb2f2" />
          <path d="M36 30 L46 26 L72 66 L66 72 L54 72 Z" fill="#4c525c" />
        </svg>
      </Cell>
      <div className="w-[38px] h-[76px] mt-[12px] flex justify-center shrink-0">
        <div className="w-[2px] bg-[#5a5e6b]"></div>
      </div>
      <Cell>
        <svg viewBox="0 0 70 72" className="w-[70px] h-[72px]">
          <rect x="14" y="0" width="42" height="24" fill="#ececec" />
          <path d="M0 14 H20 L24 18 H70 V72 H0 Z" fill="#6aa9cf" />
          <rect x="0" y="18" width="70" height="4" fill="#4f8fb6" />
        </svg>
      </Cell>
      <Cell>
        <svg viewBox="0 0 76 64" className="w-[76px] h-[64px]">
          <rect x="0" y="0" width="76" height="60" fill="#2c2c2c" />
          <rect x="12" y="3" width="64" height="58" fill="#fff" />
          <path d="M18 9 H70 M18 14 H70 M18 19 H70 M18 26 H60 M18 31 H70 M18 37 H70" stroke="#9a9a9a" strokeWidth="1.500" />
          <rect x="18" y="42" width="52" height="3" fill="#5b84ad" />
          <rect x="2" y="10" width="8" height="12" fill="#eee" />
          <rect x="2" y="30" width="8" height="12" fill="#eee" />
          <rect x="50" y="44" width="22" height="20" fill="#9cc0ea" />
          <circle cx="70" cy="56" r="6" fill="#8c8270" />
        </svg>
      </Cell>
      <Cell>
        <svg viewBox="0 0 60 74" className="w-[60px] h-[74px]">
          <defs>
            <linearGradient id="trash" x1="0" y1="0" x2="1" y2="0">
              <stop offset="0" stopColor="#3a3c40" />
              <stop offset="0.5" stopColor="#6a6c70" />
              <stop offset="1" stopColor="#35373b" />
            </linearGradient>
          </defs>
          <path d="M1 12 H59 L53 72 Q30 76 7 72 Z" fill="url(#trash)" />
          <ellipse cx="30" cy="12" rx="29" ry="8" fill="#2a2b2e" />
          <path d="M10 14 L16 3 L22 12 L30 1 L38 12 L46 3 L52 14 Z" fill="#dfe2e6" />
        </svg>
      </Cell>
    </div>
  </div>
);

export default function App() {
  return (
    <div className="w-[3360px] h-[2100px] bg-[#0c1424] flex flex-col overflow-hidden font-['Liberation_Sans',sans-serif]">
      <MenuBar />
      <div className="h-[2px] bg-[#44474e] shrink-0"></div>
      <TabStrip />
      <Toolbar />
      <div className="h-[1694px] bg-[#eff3f4] flex flex-col font-['Lato',sans-serif] border-b-2 border-[#b7b7b9] shrink-0">
        <PageHeader />
        <div className="w-[2001px] ml-[679px] mt-[120px] flex flex-col">
          <div className="flex items-center justify-between h-[53px]">
            <span className="text-[36px] font-bold text-[#3d4251] mt-[2px] ml-[1px]">Processing pipelines</span>
            <span className="w-[119px] h-[53px] bg-white rounded-full flex items-center justify-center text-[24px] font-bold text-[#3d4251]">50 XP</span>
          </div>
          <div className="mt-[38px]">
            <Card />
          </div>
          <div className="mt-[32px] self-end w-[156px] h-[72px] bg-[#f6c75e] rounded-[8px] flex items-center justify-center text-[32px] font-bold text-[#3d4251]">Got it!</div>
        </div>
        <Pagination />
      </div>
      <DownloadBar />
      <Dock />
    </div>
  );
}
